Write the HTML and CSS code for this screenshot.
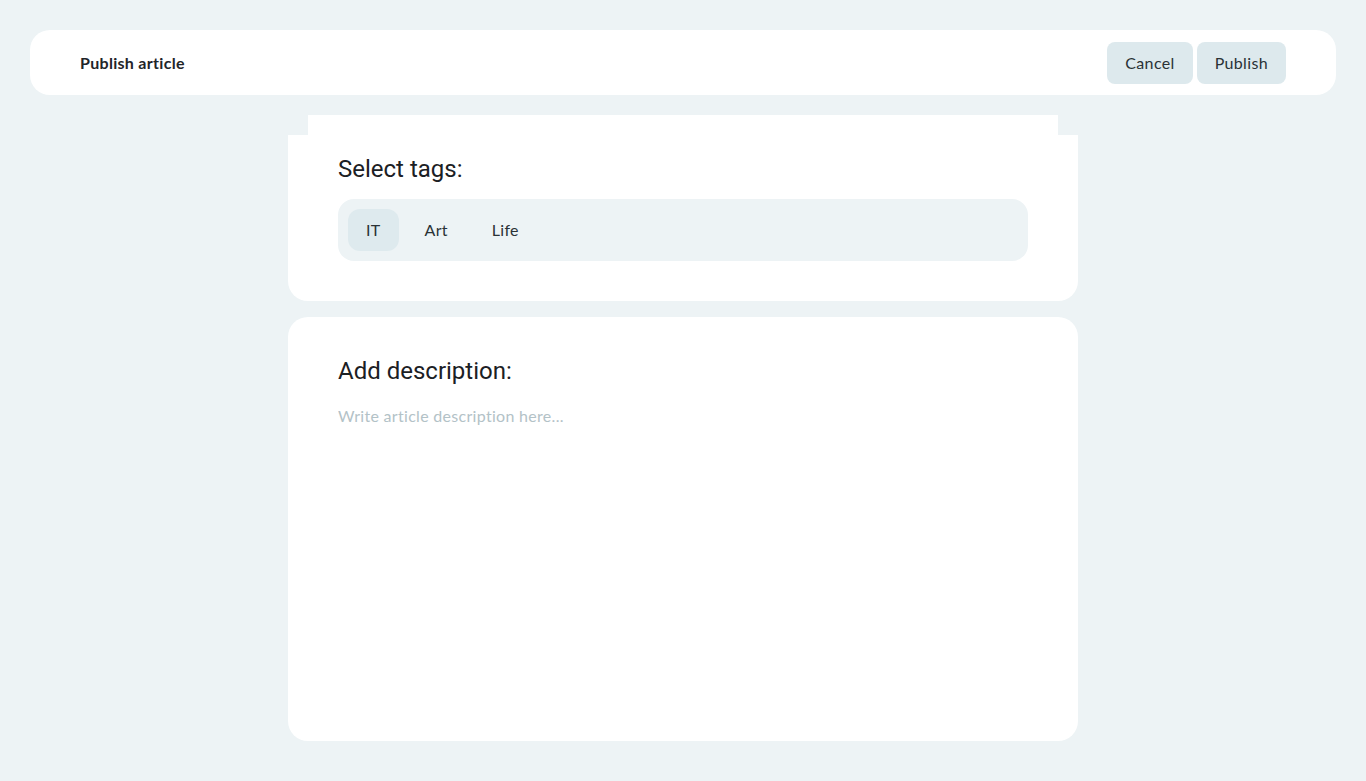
FILE: index.html
```html
<!DOCTYPE html>
<html lang="en">
<head>
<meta charset="utf-8">
<title>Publish article</title>
<link rel="stylesheet" href="styles.css">
</head>
<body>
<div class="page">
  <header class="topbar">
    <h1 class="topbar-title">Publish article</h1>
    <div class="topbar-actions">
      <button class="btn">Cancel</button>
      <button class="btn">Publish</button>
    </div>
  </header>
  <main class="content">
    <section class="card card-tags">
      <h2 class="card-title">Select tags:</h2>
      <div class="tags">
        <button class="tag tag-active">IT</button>
        <button class="tag">Art</button>
        <button class="tag">Life</button>
      </div>
    </section>
    <section class="card card-desc">
      <h2 class="card-title">Add description:</h2>
      <textarea class="desc-input" placeholder="Write article description here..."></textarea>
    </section>
  </main>
</div>
</body>
</html>
```

FILE: styles.css
```css
* { box-sizing: border-box; }
html, body {
  margin: 0;
  padding: 0;
  background: #edf3f5;
  font-family: "Lato", "Noto Sans", sans-serif;
  letter-spacing: 0.3px;
  color: #1f2529;
}
.page {
  padding: 30px 30px 40px;
}
.topbar {
  background: #ffffff;
  border-radius: 20px;
  height: 65px;
  padding: 0 50px;
  display: flex;
  align-items: center;
  justify-content: space-between;
}
.topbar-title {
  margin: 0;
  font-size: 16px;
  font-weight: 700;
  color: #1f2529;
}
.topbar-actions {
  display: flex;
  gap: 4px;
}
.btn {
  height: 42px;
  padding: 0 18px;
  border: none;
  border-radius: 8px;
  background: #dde9ed;
  color: #2a3236;
  font-family: inherit;
  letter-spacing: 0.35px;
  font-size: 16px;
  line-height: 20px;
  cursor: pointer;
}
.content {
  width: 790px;
  margin: 20px auto 0;
  display: flex;
  flex-direction: column;
  gap: 16px;
}
.card {
  background: #ffffff;
  border-radius: 20px;
  padding: 40px 50px;
}
.card-tags {
  position: relative;
  margin-top: 20px;
  border-radius: 0 0 20px 20px;
  padding-top: 20px;
}
.card-tags::before {
  content: "";
  position: absolute;
  top: -20px;
  left: 20px;
  right: 20px;
  height: 20px;
  background: #ffffff;
}
.card-title {
  margin: 0;
  font-family: "Roboto", "Inter", sans-serif;
  font-weight: 400;
  font-size: 24px;
  line-height: 28px;
  letter-spacing: 0;
  color: #1b2024;
}
.tags {
  margin-top: 16px;
  background: #edf3f5;
  border-radius: 16px;
  padding: 10px;
  display: flex;
  gap: 8px;
}
.tag {
  height: 42px;
  padding: 0 18px 1px;
  border: none;
  border-radius: 12px;
  background: transparent;
  color: #2a3236;
  font-family: inherit;
  letter-spacing: inherit;
  font-size: 16px;
  line-height: 20px;
  cursor: pointer;
}
.tag-active {
  background: #deeaee;
}
.desc-input {
  display: block;
  width: 100%;
  height: 296px;
  margin-top: 20px;
  border: none;
  outline: none;
  resize: none;
  padding: 0;
  font-family: inherit;
  letter-spacing: inherit;
  font-size: 16px;
  line-height: 22px;
  color: #1f2529;
  background: transparent;
}
.desc-input::placeholder {
  color: #b3c2c7;
}
```
